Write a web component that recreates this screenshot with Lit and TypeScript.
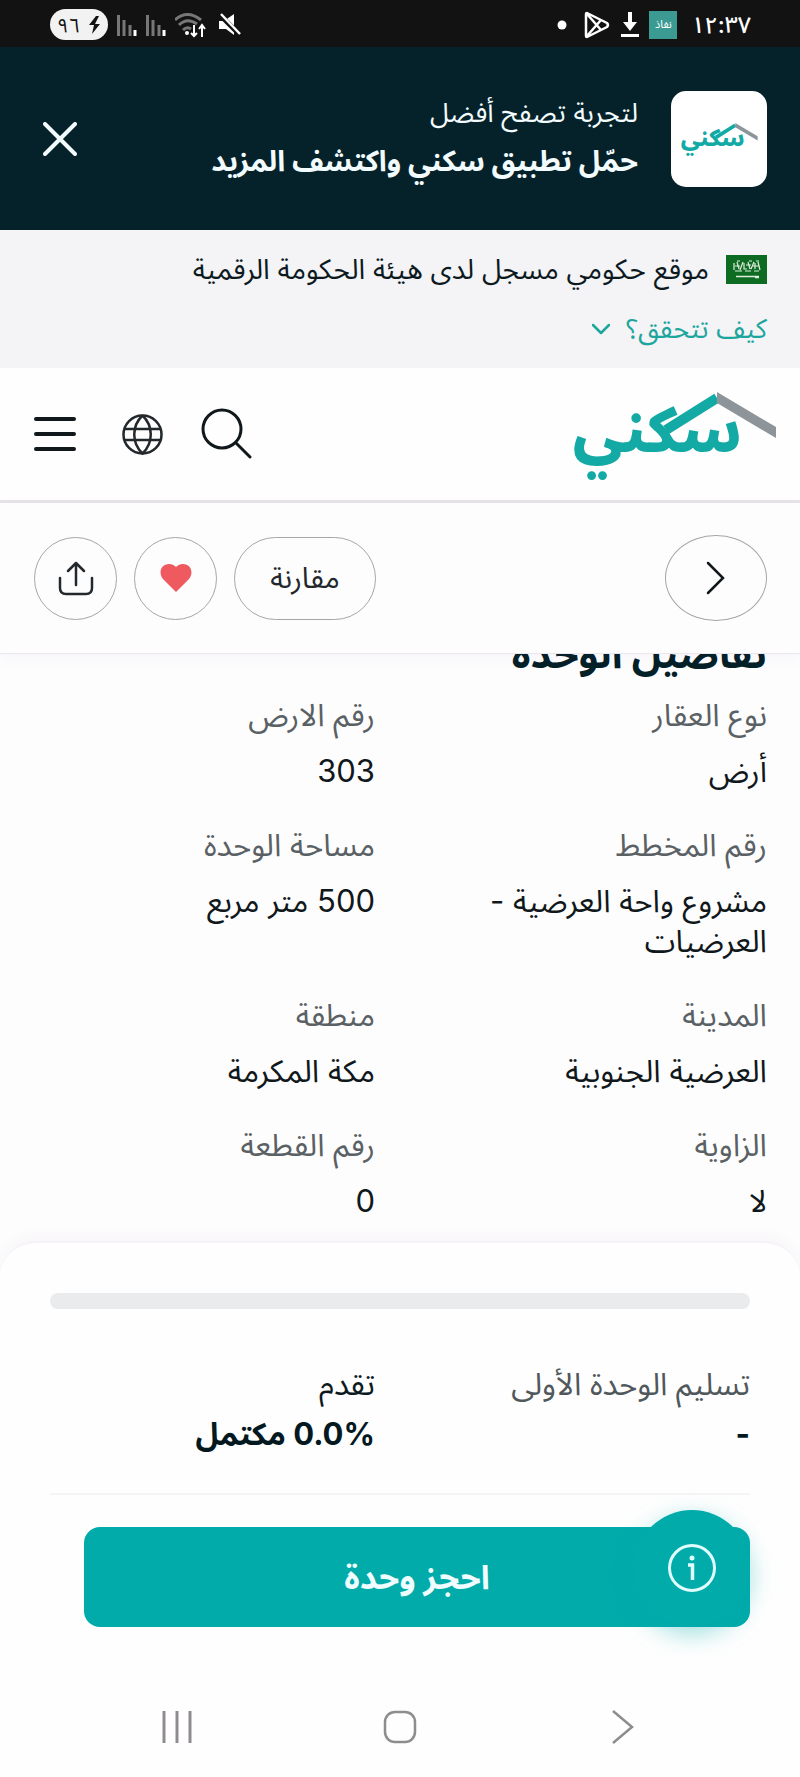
import { LitElement, html, css } from "lit";
import { customElement, property } from "lit/decorators.js";

interface Field {
  label: string;
  value: string;
}

const FIELDS: Field[] = [
  { label: "نوع العقار", value: "أرض" },
  { label: "رقم الارض", value: "303" },
  { label: "رقم المخطط", value: "مشروع واحة العرضية - العرضيات" },
  { label: "مساحة الوحدة", value: "500 متر مربع" },
  { label: "المدينة", value: "العرضية الجنوبية" },
  { label: "منطقة", value: "مكة المكرمة" },
  { label: "الزاوية", value: "لا" },
  { label: "رقم القطعة", value: "0" },
];

@customElement("sakani-logo")
export class SakaniLogo extends LitElement {
  static styles = css`
    :host {
      display: block;
    }
    svg {
      display: block;
      width: 100%;
      height: auto;
      overflow: visible;
    }
    .word {
      font-family: "Noto Sans Arabic", "DejaVu Sans", sans-serif;
      font-weight: 800;
      font-size: 62px;
      fill: #13aaa5;
      direction: rtl;
    }
  `;
  render() {
    return html`<svg viewBox="0 0 206 84" role="img" aria-label="سكني">
      <path d="M95 38 L146 6" fill="none" stroke="#13aaa5" stroke-width="10" />
      <path d="M146 0 L205 35 V46 L146 11 Z" fill="#8d959b" />
      <text class="word" x="171" y="60">سكني</text>
    </svg>`;
  }
}

@customElement("status-bar")
export class StatusBar extends LitElement {
  static styles = css`
    :host {
      display: flex;
      justify-content: space-between;
      align-items: center;
      direction: ltr;
      height: 47px;
      padding: 2px 49px 0 50px;
      box-sizing: border-box;
      background: #121212;
      color: #fff;
      font-family: Inter, "Noto Sans Arabic", "DejaVu Sans", sans-serif;
    }
    .group {
      display: flex;
      align-items: center;
      gap: 9px;
    }
    .pill {
      display: flex;
      align-items: center;
      justify-content: center;
      gap: 8px;
      width: 58px;
      height: 31px;
      border-radius: 16px;
      background: #f2f2f2;
      color: #121212;
      font-size: 20px;
      line-height: 30px;
    }
    .badge {
      width: 28px;
      height: 28px;
      background: #3b9b93;
      font-size: 11px;
      line-height: 26px;
      text-align: center;
    }
    .time {
      margin-left: 5px;
      font-size: 23px;
      line-height: 30px;
      font-weight: 500;
    }
    svg {
      display: block;
    }
  `;
  private bars() {
    return html`<svg width="20" height="24" viewBox="0 0 20 24" fill="none" stroke-width="3">
      <path d="M1.500 2V23M7 7V23M13 12V23" stroke="#777" />
      <path d="M18 17V23" stroke="#fff" />
    </svg>`;
  }
  render() {
    return html`
      <div class="group">
        <span class="pill"
          ><span>٩٦</span
          ><svg width="13" height="18" viewBox="0 0 13 18">
            <path d="M8 0 1 9h5L4 18l8-10H7l4-8z" fill="#121212" /></svg
        ></span>
        ${this.bars()} ${this.bars()}
        <svg width="34" height="28" viewBox="2 0 34 28" fill="none" stroke-width="3">
          <path d="M2 9Q14-2 28 9M6 14Q14 6 24 13M10 19Q14 15 18 18" stroke="#777" />
          <circle cx="14" cy="22" r="2" fill="#fff" />
          <path d="M21 14v11m-3-3 3 3 3-3M29 26V14m-3 4 3-4 3 4" stroke="#fff" stroke-width="2" />
        </svg>
        <svg width="23" height="24" viewBox="0 0 23 24">
          <path d="M1 8h5l10-7v21l-8-6H1z" fill="#fff" />
          <path d="M1 1 22 22" stroke="#121212" stroke-width="5" />
          <path d="M3 1 22 21" stroke="#fff" stroke-width="2.500" />
        </svg>
      </div>
      <div class="group">
        <svg width="10" height="10" viewBox="0 0 10 10"><circle cx="5" cy="5" r="4.500" fill="#fff" /></svg>
        <svg width="35" height="28" viewBox="-8 0 35 28" fill="none" stroke="#fff" stroke-width="2.500" stroke-linejoin="round">
          <path d="M3 2 23 12q2 2 0 4L3 26q-1 0-1-1V3q0-1 1-1zM3 3 17 19M3 25 17 9" />
        </svg>
        <svg width="20" height="27" viewBox="0 0 20 27" fill="#fff">
          <path d="M8 1h4v10h5l-7 9-7-9h5zM1 23h18v3H1z" />
        </svg>
        <span class="badge">نفاذ</span>
        <span class="time">١٢:٣٧</span>
      </div>
    `;
  }
}

@customElement("detail-field")
export class DetailField extends LitElement {
  @property() label = "";
  @property() value = "";
  static styles = css`
    :host {
      display: flex;
      flex-direction: column;
      gap: 16px;
      line-height: 40px;
    }
    .label {
      color: #5a6164;
    }
    .value {
      color: #10181b;
    }
  `;
  render() {
    return html`<div class="label">${this.label}</div>
      <div class="value">${this.value}</div>`;
  }
}

@customElement("app-root")
export class AppRoot extends LitElement {
  static styles = css`
    :host {
      display: flex;
      flex-direction: column;
      min-height: 100vh;
      direction: rtl;
      background: #fefdfe;
      color: #0c1a1f;
      font-family: Inter, "Noto Sans Arabic", "DejaVu Sans", sans-serif;
      font-size: 31px;
      line-height: 40px;
    }
    * {
      box-sizing: border-box;
    }
    button {
      font: inherit;
      color: inherit;
      background: none;
      border: 0;
      padding: 0;
      display: flex;
      align-items: center;
      justify-content: center;
    }
    svg {
      display: block;
    }
    .promo {
      display: flex;
      align-items: center;
      gap: 33px;
      height: 183px;
      padding: 0 33px 0 43px;
      background: #05222a;
      color: #f2fbfd;
    }
    .app-icon {
      display: flex;
      align-items: center;
      justify-content: center;
      width: 96px;
      height: 96px;
      border-radius: 15px;
      background: #fff;
    }
    .app-icon sakani-logo {
      width: 78px;
    }
    .promo-text {
      flex: 1;
      line-height: 48px;
      padding-bottom: 4px;
    }
    .promo-text p {
      margin: 0;
      font-size: 27px;
    }
    .promo-text strong {
      display: block;
      font-size: 29px;
    }
    .gov {
      padding: 19px 33px;
      height: 138px;
      background: #f4f3f6;
    }
    .gov-row {
      display: flex;
      align-items: center;
      gap: 17px;
      font-size: 28px;
    }
    .gov-link {
      display: inline-flex;
      align-items: center;
      gap: 16px;
      margin-top: 20px;
      color: #1da69d;
      font-size: 27px;
      text-decoration: none;
    }
    .header {
      display: flex;
      align-items: center;
      justify-content: space-between;
      height: 135px;
      padding: 0 23px 0 34px;
      background: #fefefe;
      border-bottom: 3px solid #e6e4e8;
    }
    .header sakani-logo {
      width: 206px;
    }
    .tools {
      display: flex;
      align-items: center;
      gap: 38px;
    }
    .menu {
      width: 50px;
      justify-content: flex-end;
    }
    .actions {
      position: relative;
      display: flex;
      align-items: center;
      justify-content: space-between;
      height: 151px;
      padding: 0 33px 0 34px;
      background: #fefdfe;
      border-bottom: 1px solid #e9e7eb;
      box-shadow: 0 4px 14px #3020400a;
    }
    .group {
      display: flex;
      gap: 17px;
    }
    .round {
      width: 83px;
      height: 83px;
      border: 1px solid #a8a4a8;
      border-radius: 50%;
    }
    .back {
      width: 102px;
      height: 86px;
    }
    .compare {
      width: 142px;
      height: 83px;
      border: 1px solid #a8a4a8;
      border-radius: 42px;
      color: #22282b;
      font-size: 29px;
    }
    .details {
      flex: 1;
      overflow: hidden;
      padding: 0 33px 20px;
    }
    h2 {
      margin: -26px 0 15px;
      font-size: 40px;
      line-height: 52px;
      color: #04212a;
    }
    .grid {
      display: grid;
      grid-template-columns: 1fr 1fr;
      gap: 34px 50px;
    }
    .sheet {
      padding: 50px;
      border-top: 2px solid #f6f3f8;
      border-radius: 36px 36px 0 0;
      background: #fefefe;
      box-shadow: 0 -6px 14px #30204008;
    }
    progress {
      display: block;
      width: 100%;
      height: 16px;
      border: 0;
      border-radius: 8px;
      appearance: none;
      background: #e9ebed;
      overflow: hidden;
    }
    progress::-webkit-progress-bar {
      background: #e9ebed;
    }
    progress::-webkit-progress-value {
      background: #00abaa;
    }
    .stats {
      display: grid;
      grid-template-columns: 1fr 1fr;
      gap: 10px 50px;
      padding: 55px 0 39px;
      border-bottom: 2px solid #f5f4f6;
    }
    .muted {
      color: #50585b;
    }
    .stats strong {
      color: #04191f;
    }
    .book {
      position: relative;
      margin: 32px 0 0 34px;
    }
    .cta {
      width: 100%;
      height: 100px;
      border-radius: 16px;
      background: #00abaa;
      color: #effdff;
      font-size: 33px;
      font-weight: 700;
    }
    .info {
      position: absolute;
      right: 0;
      top: -17px;
      width: 116px;
      height: 116px;
      border-radius: 50%;
      background: #00abaa;
      box-shadow: 0 8px 24px #00abaa60;
    }
    .nav {
      display: flex;
      justify-content: space-around;
      align-items: center;
      direction: ltr;
      height: 100px;
      padding: 0 65px;
      background: #fefefe;
    }
    .nav button {
      width: 60px;
      height: 60px;
    }
  `;

  render() {
    return html`
      <status-bar></status-bar>
      <section class="promo">
        <div class="app-icon"><sakani-logo></sakani-logo></div>
        <div class="promo-text">
          <p>لتجربة تصفح أفضل</p>
          <strong>حمّل تطبيق سكني واكتشف المزيد</strong>
        </div>
        <button aria-label="إغلاق">
          <svg width="34" height="34" viewBox="0 0 34 34" stroke="#f2fbfd" stroke-width="4" stroke-linecap="round">
            <path d="M2 2 32 32M32 2 2 32" />
          </svg>
        </button>
      </section>
      <section class="gov">
        <div class="gov-row">
          <svg width="41" height="29" viewBox="0 0 41 29" fill="none" stroke="#dfeee0">
            <path d="M0 0H41V29H0Z" fill="#0d6b22" stroke="none" />
            <path
              d="M8 8v7M11 7l2 7M14 15l3-8M18 8v6h3M22 7l2 7M25 14l3-7M29 8v6M32 7l2 8M9 16h7M19 16h6M28 16h5M9 11h5M20 10h5M27 11h6M11 6h3M23 6h3M30 6h3"
              stroke-width="1.200"
            />
            <path d="M10 21.500H33M29 22.500h4" stroke-width="1.600" />
          </svg>
          <span>موقع حكومي مسجل لدى هيئة الحكومة الرقمية</span>
        </div>
        <a class="gov-link" href="#verify">
          <span>كيف تتحقق؟</span>
          <svg width="18" height="12" viewBox="0 0 18 12" fill="none" stroke="#1da69d" stroke-width="2.500" stroke-linecap="round" stroke-linejoin="round">
            <path d="M1 2 9 10 17 2" />
          </svg>
        </a>
      </section>
      <header class="header">
        <sakani-logo></sakani-logo>
        <div class="tools">
          <button aria-label="بحث">
            <svg width="51" height="52" viewBox="0 0 51 52" fill="none" stroke="#10181b" stroke-width="3" stroke-linecap="round">
              <circle cx="21" cy="21" r="19" />
              <path d="M35 35 49 49" />
            </svg>
          </button>
          <button aria-label="اللغة">
            <svg width="41" height="41" viewBox="0 0 41 41" fill="none" stroke="#22282b" stroke-width="2.500">
              <circle cx="20.500" cy="20.500" r="19" />
              <path d="M20.500 1.500C9.500 12 9.500 29 20.500 39.500C31.500 29 31.500 12 20.500 1.500M2.500 15H38.500M2.500 26H38.500" />
            </svg>
          </button>
          <button class="menu" aria-label="القائمة">
            <svg width="42" height="36" viewBox="0 0 42 36" stroke="#10181b" stroke-width="4" stroke-linecap="round">
              <path d="M2 3H40M2 18H40M2 33H40" />
            </svg>
          </button>
        </div>
      </header>
      <nav class="actions">
        <button class="round back" aria-label="رجوع">
          <svg width="20" height="34" viewBox="0 0 20 34" fill="none" stroke="#10181b" stroke-width="2.500" stroke-linecap="round">
            <path d="M2 2 17 17 2 32" />
          </svg>
        </button>
        <div class="group">
          <button class="compare">مقارنة</button>
          <button class="round" aria-label="المفضلة">
            <svg width="32" height="28" viewBox="0 0 32 28">
              <path d="M16 28 3 15C-2 9 1 0 9 0c3 0 5 1 7 3 2-2 4-3 7-3 8 0 11 9 6 15z" fill="#ee5a5f" />
            </svg>
          </button>
          <button class="round" aria-label="مشاركة">
            <svg width="36" height="35" viewBox="0 0 36 35" fill="none" stroke="#22282b" stroke-width="2.500" stroke-linecap="round" stroke-linejoin="round">
              <path d="M18 24V2M10 10 18 2 26 10M2 17V27Q2 33 8 33H28Q34 33 34 27V17" />
            </svg>
          </button>
        </div>
      </nav>
      <main class="details">
        <h2>تفاصيل الوحدة</h2>
        <div class="grid">
          ${FIELDS.map((f) => html`<detail-field .label=${f.label} .value=${f.value}></detail-field>`)}
        </div>
      </main>
      <section class="sheet">
        <progress value="0" max="100" aria-label="تقدم"></progress>
        <div class="stats">
          <span class="muted">تسليم الوحدة الأولى</span>
          <span>تقدم</span>
          <strong>-</strong>
          <strong><bdi dir="ltr">0.0%</bdi> مكتمل</strong>
        </div>
        <div class="book">
          <button class="info" aria-label="معلومات">
            <svg width="50" height="50" viewBox="0 0 50 50" fill="none" stroke="#dffcff" stroke-width="3">
              <circle cx="25" cy="25" r="22.500" />
              <path d="M21 22H25.500V37" stroke-width="3.500" />
              <circle cx="25" cy="15" r="2.500" fill="#dffcff" stroke="none" />
            </svg>
          </button>
          <button class="cta">احجز وحدة</button>
        </div>
      </section>
      <nav class="nav">
        <button aria-label="التطبيقات الأخيرة">
          <svg width="30" height="32" viewBox="0 0 30 32" stroke="#8f8c90" stroke-width="3">
            <path d="M2 0V32M15 0V32M28 0V32" />
          </svg>
        </button>
        <button aria-label="الرئيسية">
          <svg width="34" height="34" viewBox="0 0 34 34" fill="none" stroke="#8f8c90" stroke-width="2.500">
            <rect x="2" y="2" width="30" height="30" rx="10" />
          </svg>
        </button>
        <button aria-label="رجوع">
          <svg width="22" height="34" viewBox="0 0 22 34" fill="none" stroke="#8f8c90" stroke-width="2.500">
            <path d="M1 1 20 17 1 33" />
          </svg>
        </button>
      </nav>
    `;
  }
}
